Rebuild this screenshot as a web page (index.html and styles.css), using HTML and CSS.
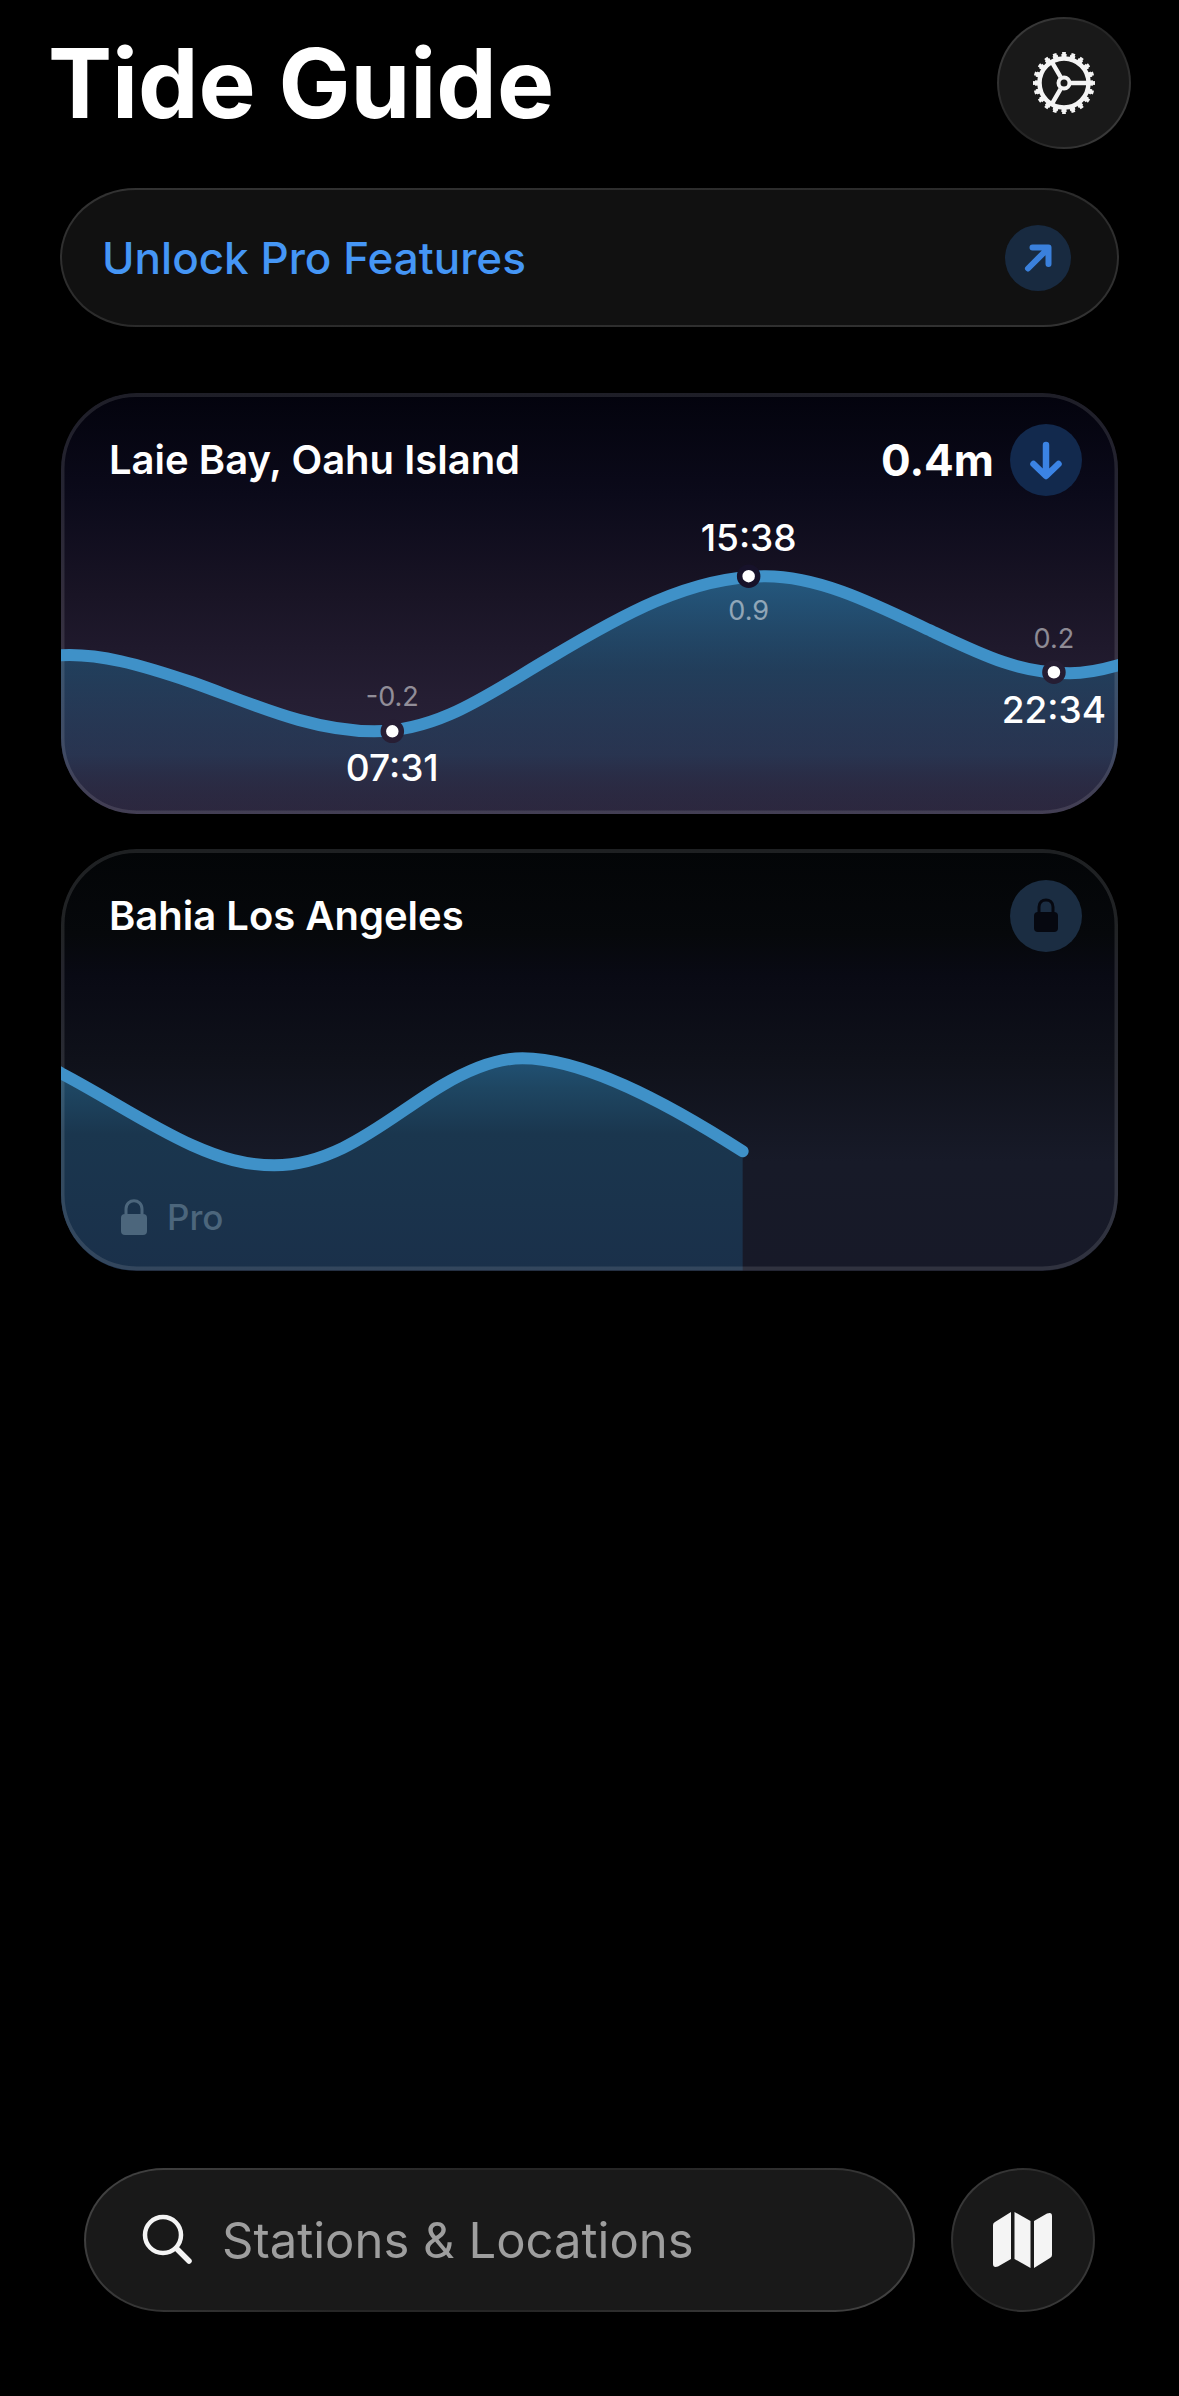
FILE: index.html
```html
<!DOCTYPE html>
<html lang="en">
<head>
    <meta charset="utf-8">
    <meta name="viewport" content="width=device-width, initial-scale=1">
    <link rel="stylesheet" href="styles.css">
    <title>Tide Guide</title>
</head>
<body>
<div class="app">

    <header class="top">
        <h1>Tide Guide</h1>
        <button class="glass round" type="button" aria-label="Settings">
            <svg width="64" height="64" viewBox="-32 -32 64 64" fill="none" stroke="#f4f4f4">
                <circle r="24.5" stroke-width="4.5"/>
                <!-- 20 teeth, two dashed rings so they taper -->
                <circle r="27.5" stroke-width="3" pathLength="200" stroke-dasharray="6 4" stroke-dashoffset="3"/>
                <circle r="29.5" stroke-width="3" pathLength="200" stroke-dasharray="4 6" stroke-dashoffset="2"/>
                <circle r="5.5" stroke-width="4"/>
                <path d="M7 0H23M-3.5 6.1L-11.5 19.9M-3.5 -6.1L-11.5 -19.9" stroke-width="4.4"/>
            </svg>
        </button>
    </header>

    <main>
        <a class="glass unlock" href="#pro">
            <span>Unlock Pro Features</span>
            <span class="badge badge-small">
                <svg width="66" height="66" viewBox="0 0 66 66" fill="none" stroke="#3a80dc" stroke-width="6" stroke-linecap="round" stroke-linejoin="round">
                    <path d="M23 43.5L43 23.5M27.5 22.5H43.5V39"/>
                </svg>
            </span>
        </a>

        <section class="cards">
            <article class="card card-laie">
                <svg class="chart" viewBox="0 0 1056 421" role="img" aria-label="Tide curve for Laie Bay">
                    <defs>
                        <linearGradient id="water1" gradientUnits="userSpaceOnUse" x1="0" y1="183" x2="0" y2="421">
                            <stop offset="0" stop-color="#26618a" stop-opacity=".9"/>
                            <stop offset=".4" stop-color="#225072" stop-opacity=".65"/>
                            <stop offset=".75" stop-color="#294668" stop-opacity=".5"/>
                            <stop offset="1" stop-color="#2b2c46" stop-opacity=".1"/>
                        </linearGradient>
                    </defs>
                    <path fill="url(#water1)" d="M0 262C38 260 78 271 131 289C188 309 248 338 313 338C378 338 428 300 488 265C558 223 628 183 704 183C758 183 813 211 870 238C923 263 958 280 1008 280C1026 280 1042 276 1056 272V421H0Z"/>
                    <rect class="rim" x="1.5" y="2" width="1053" height="417" rx="74"/>
                    <path class="tide" d="M-10 262H0C38 260 78 271 131 289C188 309 248 338 313 338C378 338 428 300 488 265C558 223 628 183 704 183C758 183 813 211 870 238C923 263 958 280 1008 280C1026 280 1042 276 1056 272L1070 268"/>
                    <g stroke-width="5.5" fill="#fff">
                        <circle cx="331" cy="338" r="9" stroke="#271e34"/>
                        <circle cx="687" cy="183" r="9" stroke="#17122a"/>
                        <circle cx="992" cy="279" r="9" stroke="#251d33"/>
                    </g>
                    <text class="height" x="331" y="313">-0.2</text>
                    <text class="time" x="331" y="388">07:31</text>
                    <text class="time" x="687" y="158">15:38</text>
                    <text class="height" x="687" y="227">0.9</text>
                    <text class="height" x="992" y="255">0.2</text>
                    <text class="time" x="992" y="330">22:34</text>
                </svg>
                <div class="card-head">
                    <h2>Laie Bay, Oahu Island</h2>
                    <span class="level">0.4m</span>
                    <span class="badge badge-down">
                        <svg width="72" height="72" viewBox="0 0 72 72" fill="none" stroke="#3b83e4" stroke-width="6.5" stroke-linecap="round" stroke-linejoin="round">
                            <path d="M36 21V51M23.5 40L36 52L48.5 40"/>
                        </svg>
                    </span>
                </div>
            </article>

            <article class="card card-bahia">
                <svg class="chart" viewBox="0 0 1056 421" role="img" aria-label="Tide curve for Bahia Los Angeles">
                    <defs>
                        <linearGradient id="water2" gradientUnits="userSpaceOnUse" x1="0" y1="209" x2="0" y2="421">
                            <stop offset="0" stop-color="#215275"/>
                            <stop offset=".14" stop-color="#1e4662"/>
                            <stop offset=".36" stop-color="#1a364e"/>
                            <stop offset="1" stop-color="#1a304a"/>
                        </linearGradient>
                    </defs>
                    <path fill="url(#water2)" d="M0 224C46 248 85 275 131 296C160 309 184 316 213 316C279 316 330 266 381 236C410 219 436 209 461 209C520 209 600 250 681 302V421H0Z"/>
                    <rect class="rim" x="1.5" y="2" width="1053" height="417" rx="74"/>
                    <path class="tide" d="M-12 217L0 224C46 248 85 275 131 296C160 309 184 316 213 316C279 316 330 266 381 236C410 219 436 209 461 209C520 209 600 250 681 302"/>
                </svg>
                <div class="card-head">
                    <h2>Bahia Los Angeles</h2>
                    <span class="badge badge-lock">
                        <svg width="24" height="36" viewBox="0 0 24 36">
                            <rect x="0" y="14" width="24" height="20" rx="4" fill="#060810"/>
                            <path d="M5 15V9C5 -0.5 19 -0.5 19 9V15" fill="none" stroke="#060810" stroke-width="3"/>
                        </svg>
                    </span>
                </div>
                <div class="pro">
                    <svg width="26" height="36" viewBox="0 0 26 36">
                        <rect x="0" y="15" width="26" height="21" rx="4" fill="currentColor"/>
                        <path d="M5 15V10C5 -1 21 -1 21 10V15" fill="none" stroke="currentColor" stroke-width="3"/>
                    </svg>
                    <span>Pro</span>
                </div>
            </article>
        </section>
    </main>

    <div class="dock">
        <label class="glass search">
            <svg width="52" height="52" viewBox="0 0 52 52" fill="none" stroke="#f4f4f4" stroke-linecap="round">
                <circle cx="21" cy="21" r="18" stroke-width="4.5"/>
                <path d="M34.5 34.5L47 47" stroke-width="5.5"/>
            </svg>
            <input type="text" placeholder="Stations &amp; Locations" aria-label="Stations and locations">
        </label>
        <button class="glass round round-big" type="button" aria-label="Map">
            <svg width="60" height="56" viewBox="0 0 60 56" fill="#f4f4f4">
                <path d="M0 13Q0 11 2 10L18 0V47L5 54.5Q0 56 0 52Z"/>
                <path d="M21.5 0L37.5 9V56L21.5 47Z"/>
                <path d="M41 9L54 1.5Q59 -0.5 59 4V43Q59 45 57 46L41 56Z"/>
            </svg>
        </button>
    </div>

</div>
</body>
</html>
```
FILE: styles.css
```css
* { box-sizing: border-box; margin: 0; padding: 0; }

body {
    background: #000;
    color: #fff;
    font-family: Inter, "Liberation Sans", sans-serif;
}

svg { display: block; flex: none; }

.app {
    display: flex;
    flex-direction: column;
    min-height: 100vh;
}

/* header */
.top {
    display: flex;
    align-items: center;
    justify-content: space-between;
    padding: 17px 48px 0;
}
.top h1 {
    font-size: 96px;
    line-height: 132px;
    font-weight: 700;
}

/* dark glass: rim is brighter top-left and bottom-right */
.glass {
    border: 2px solid transparent;
    background:
        linear-gradient(#191919, #191919) padding-box,
        linear-gradient(135deg, #444, #262626 40%, #262626 60%, #444) border-box;
    color: inherit;
    font: inherit;
}
.round {
    display: flex;
    align-items: center;
    justify-content: center;
    width: 134px;
    height: 132px;
    border-radius: 50%;
}
.round-big { width: 144px; height: 144px; flex: none; }

/* pro banner */
.unlock {
    display: flex;
    align-items: center;
    justify-content: space-between;
    height: 139px;
    margin: 39px 60px 66px;
    padding: 0 46px 0 40px;
    border-radius: 76px / 70px;
    background:
        linear-gradient(#111, #111) padding-box,
        linear-gradient(170deg, #333, #2a2a2a 50%, #333) border-box;
    color: #4596f5;
    font-size: 44px;
    font-weight: 500;
    text-decoration: none;
}

.badge {
    display: flex;
    align-items: center;
    justify-content: center;
    width: 72px;
    height: 72px;
    border-radius: 50%;
}
.badge-small { width: 66px; height: 66px; background: #182a40; }
.badge-down { background: #12294d; }
.badge-lock { background: #1b2d42; }

/* station cards */
.cards {
    display: grid;
    gap: 35px;
    padding: 0 61px;
}
.card {
    display: grid;
    overflow: hidden;
    border-radius: 76px;
}
/* chart, heading and pro mark share one cell */
.card > * { grid-area: 1 / 1; }
.card-laie {
    background: linear-gradient(#03030d, #0b0a1a 24%, #191425 48%, #251e33 73%, #2c273e);
}
.card-bahia {
    background: linear-gradient(#030507, #06080b 20%, #090a14 30%, #0f111a 50%, #171a28 74%, #171928);
}
.chart { width: 100%; height: auto; }
.rim { fill: none; stroke: #fff; stroke-opacity: .11; stroke-width: 4px; }
.tide { fill: none; stroke: #3f91c8; stroke-width: 12px; stroke-linecap: round; }
.time, .height { text-anchor: middle; fill: #fff; }
.time { font-size: 37px; font-weight: 500; }
.height { font-size: 27px; fill-opacity: .5; }

.card-head {
    display: flex;
    align-items: center;
    align-self: start;
    padding: 31px 36px 0 48px;
}
.card-head h2 {
    flex: 1;
    font-size: 40px;
    line-height: 48px;
    font-weight: 600;
}
.level {
    margin-right: 16px;
    font-size: 44px;
    line-height: 48px;
    font-weight: 700;
}
.pro {
    display: flex;
    align-items: center;
    align-self: end;
    gap: 20px;
    padding: 0 60px 34px;
    color: #4c667c;
    font-size: 35px;
    line-height: 40px;
    font-weight: 500;
}

/* bottom bar */
.dock {
    display: flex;
    gap: 36px;
    margin-top: auto;
    padding: 36px 84px 84px;
}
.search {
    display: flex;
    flex: 1;
    align-items: center;
    gap: 28px;
    min-width: 0;
    height: 144px;
    padding: 0 56px;
    border-radius: 80px / 72px;
}
.search input {
    flex: 1;
    min-width: 0;
    border: 0;
    outline: 0;
    background: none;
    color: #fff;
    font: inherit;
    font-size: 49px;
}
.search input::placeholder { color: #9e9e9e; opacity: 1; }
```
